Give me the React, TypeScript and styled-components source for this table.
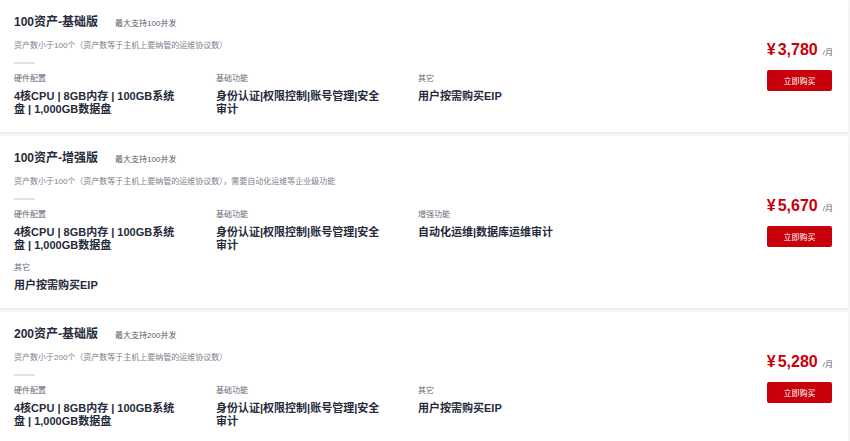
import styled, { createGlobalStyle } from "styled-components";

const GlobalStyle = createGlobalStyle`
  body {
    margin: 0;
    background: #f7f7f8;
    font-family: "Liberation Sans", "Noto Sans CJK SC", sans-serif;
  }
`;

const List = styled.div`
  width: 848px;
  display: flex;
  flex-direction: column;
  gap: 4px;
`;

const Card = styled.section`
  display: flex;
  align-items: center;
  background: #fff;
  padding: 14px 15px 16px 14px;
  box-shadow: 0 1px 3px rgba(0, 0, 0, 0.06);
`;

const Content = styled.div`
  flex: 1;
`;

const TitleRow = styled.div`
  display: flex;
  align-items: baseline;
  gap: 17px;
  line-height: 16px;
`;

const Title = styled.h2`
  margin: 0;
  font-size: 12px;
  font-weight: bold;
  color: #252b3a;
`;

const Concurrency = styled.span`
  font-size: 8px;
  color: #575d6c;
`;

const Desc = styled.p`
  margin: 8px 0 0;
  font-size: 8px;
  line-height: 12px;
  color: #7d818c;
`;

const Divider = styled.div`
  width: 21px;
  height: 2px;
  margin-top: 10px;
  background: #dfe1e6;
`;

const Specs = styled.div`
  display: grid;
  grid-template-columns: repeat(3, 202px);
  row-gap: 10px;
  margin-top: 9px;
`;

const Spec = styled.div`
  display: flex;
  flex-direction: column;
  gap: 5px;
`;

const SpecLabel = styled.span`
  font-size: 8px;
  line-height: 12px;
  color: #666a75;
`;

const SpecValue = styled.span`
  max-width: 166px;
  font-size: 11px;
  font-weight: bold;
  line-height: 13px;
  color: #252b3a;
`;

const PriceBox = styled.div`
  display: flex;
  flex-direction: column;
  align-items: flex-end;
  gap: 10px;
`;

const Price = styled.div`
  display: flex;
  align-items: baseline;
  height: 20px;
  line-height: 20px;
  color: #c7000b;
  font-weight: bold;
`;

const Currency = styled.span`
  font-size: 16px;
  margin-right: 2px;
`;

const Amount = styled.span`
  font-size: 16px;
`;

const Unit = styled.span`
  margin-left: 5px;
  font-size: 8px;
  font-weight: normal;
  color: #575d6c;
`;

const BuyButton = styled.button`
  width: 65px;
  height: 21px;
  border: none;
  border-radius: 2px;
  background: #c7000b;
  color: #fff;
  font-family: inherit;
  font-size: 8px;
  cursor: pointer;
  margin-right: 1px;
`;

type Plan = {
  title: string;
  concurrency: string;
  desc: string;
  price: string;
  specs: { label: string; value: string }[];
};

const hardware = {
  label: "硬件配置",
  value: "4核CPU | 8GB内存 | 100GB系统盘 | 1,000GB数据盘",
};
const basic = {
  label: "基础功能",
  value: "身份认证|权限控制|账号管理|安全审计",
};
const other = { label: "其它", value: "用户按需购买EIP" };

const plans: Plan[] = [
  {
    title: "100资产-基础版",
    concurrency: "最大支持100并发",
    desc: "资产数小于100个（资产数等于主机上要纳管的运维协议数）",
    price: "3,780",
    specs: [hardware, basic, other],
  },
  {
    title: "100资产-增强版",
    concurrency: "最大支持100并发",
    desc: "资产数小于100个（资产数等于主机上要纳管的运维协议数），需要自动化运维等企业级功能",
    price: "5,670",
    specs: [
      hardware,
      basic,
      { label: "增强功能", value: "自动化运维|数据库运维审计" },
      other,
    ],
  },
  {
    title: "200资产-基础版",
    concurrency: "最大支持200并发",
    desc: "资产数小于200个（资产数等于主机上要纳管的运维协议数）",
    price: "5,280",
    specs: [hardware, basic, other],
  },
];

export default function App() {
  return (
    <>
      <GlobalStyle />
      <List>
        {plans.map((plan) => (
          <Card key={plan.title}>
            <Content>
              <TitleRow>
                <Title>{plan.title}</Title>
                <Concurrency>{plan.concurrency}</Concurrency>
              </TitleRow>
              <Desc>{plan.desc}</Desc>
              <Divider />
              <Specs>
                {plan.specs.map((s) => (
                  <Spec key={s.label}>
                    <SpecLabel>{s.label}</SpecLabel>
                    <SpecValue>{s.value}</SpecValue>
                  </Spec>
                ))}
              </Specs>
            </Content>
            <PriceBox>
              <Price>
                <Currency>¥</Currency>
                <Amount>{plan.price}</Amount>
                <Unit>/月</Unit>
              </Price>
              <BuyButton>立即购买</BuyButton>
            </PriceBox>
          </Card>
        ))}
      </List>
    </>
  );
}
